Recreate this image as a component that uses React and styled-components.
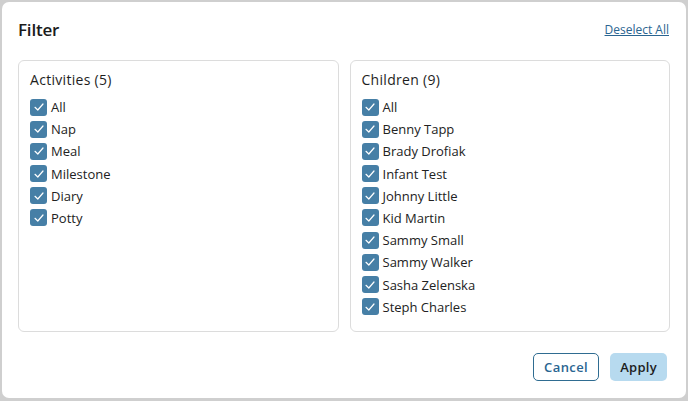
import styled, { createGlobalStyle } from "styled-components";
import { useState } from "react";

const GlobalStyle = createGlobalStyle`
  html, body {
    margin: 0;
    padding: 0;
    background: #cfcfcf;
    font-family: "Open Sans", "Liberation Sans", sans-serif;
  }
  * { box-sizing: border-box; }
`;

const activities = ["All", "Nap", "Meal", "Milestone", "Diary", "Potty"];
const children = [
  "All",
  "Benny Tapp",
  "Brady Drofiak",
  "Infant Test",
  "Johnny Little",
  "Kid Martin",
  "Sammy Small",
  "Sammy Walker",
  "Sasha Zelenska",
  "Steph Charles",
];

const CheckIcon = () => (
  <svg width="12" height="12" viewBox="0 0 12 12" fill="none">
    <path d="M2 6.3 L4.8 9 L10 3" stroke="#ffffff" strokeWidth="1.2" strokeLinecap="round" strokeLinejoin="round" />
  </svg>
);

const FilterGroup = ({ title, items }) => {
  const [checked, setChecked] = useState(() => items.map(() => true));
  const toggle = (i) => setChecked((c) => c.map((v, j) => (j === i ? !v : v)));

  return (
    <Panel>
      <PanelTitle>
        {title} ({items.length - 1})
      </PanelTitle>
      <List>
        {items.map((label, i) => (
          <Row key={label} onClick={() => toggle(i)}>
            <Box $on={checked[i]}>{checked[i] ? <CheckIcon /> : null}</Box>
            <Label>{label}</Label>
          </Row>
        ))}
      </List>
    </Panel>
  );
};

export default function App() {
  return (
    <>
      <GlobalStyle />
      <Screen>
        <Modal>
          <Header>
            <Title>Filter</Title>
            <LinkButton>Deselect All</LinkButton>
          </Header>
          <Columns>
            <FilterGroup title="Activities" items={activities} />
            <FilterGroup title="Children" items={children} />
          </Columns>
          <Footer>
            <OutlineButton>Cancel</OutlineButton>
            <PrimaryButton>Apply</PrimaryButton>
          </Footer>
        </Modal>
      </Screen>
    </>
  );
}

const Screen = styled.div`
  width: 688px;
  height: 401px;
  padding: 2px 2px 3px 2px;
`;

const Modal = styled.div`
  width: 684px;
  height: 396px;
  background: #ffffff;
  border-radius: 7px;
  padding: 0 16px 0 16px;
  display: flex;
  flex-direction: column;
`;

const Header = styled.div`
  height: 58px;
  display: flex;
  align-items: center;
  justify-content: space-between;
  padding-right: 1px;
  padding-bottom: 3px;
`;

const Title = styled.h2`
  margin: 0;
  font-size: 17px;
  font-weight: 600;
  color: #1b1b1b;
  letter-spacing: -0.2px;
`;

const LinkButton = styled.button`
  border: none;
  background: none;
  padding: 0;
  font-family: inherit;
  font-size: 12px;
  color: #2a6591;
  text-decoration: underline;
  cursor: pointer;
`;

const Columns = styled.div`
  display: grid;
  grid-template-columns: 1fr 1fr;
  gap: 11px;
  height: 272px;
`;

const Panel = styled.div`
  border: 1px solid #dcdcdc;
  border-radius: 6px;
  padding: 9px 11px;
`;

const PanelTitle = styled.div`
  font-size: 14px;
  color: #1e1e1e;
  letter-spacing: 0.3px;
  line-height: 20px;
  margin-bottom: 8px;
`;

const List = styled.div`
  display: flex;
  flex-direction: column;
  gap: 4.2px;
`;

const Row = styled.label`
  display: flex;
  align-items: center;
  gap: 4px;
  height: 18px;
  cursor: pointer;
`;

const Box = styled.span`
  width: 17px;
  height: 17px;
  border-radius: 3px;
  background: ${(p) => (p.$on ? "#467fa6" : "#ffffff")};
  border: ${(p) => (p.$on ? "none" : "1px solid #9aa")};
  display: flex;
  align-items: center;
  justify-content: center;
`;

const Label = styled.span`
  font-size: 13px;
  color: #222;
  letter-spacing: 0;
`;

const Footer = styled.div`
  flex: 1;
  display: flex;
  justify-content: flex-end;
  align-items: center;
  gap: 11px;
  padding-top: 3px;
  padding-right: 3px;
`;

const OutlineButton = styled.button`
  height: 28px;
  padding: 0 10px;
  border: 1px solid #2f6c91;
  border-radius: 5px;
  background: #ffffff;
  color: #2a6591;
  font-family: inherit;
  font-size: 13px;
  font-weight: 600;
  letter-spacing: 0.4px;
`;

const PrimaryButton = styled.button`
  height: 28px;
  padding: 0 10px;
  border: none;
  border-radius: 5px;
  background: #b7daef;
  color: #1d1d1d;
  font-family: inherit;
  font-size: 13px;
  font-weight: 600;
  letter-spacing: 0.3px;
`;
